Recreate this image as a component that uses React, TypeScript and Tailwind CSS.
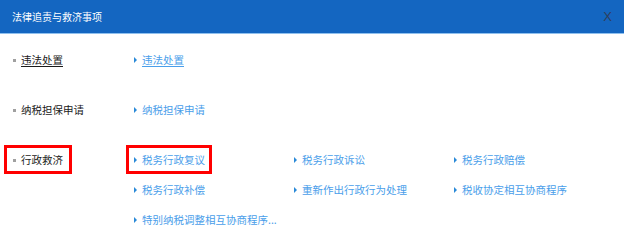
const font = { fontFamily: '"Noto Sans CJK SC", "Noto Sans", sans-serif' };

type Item = { text: string; marked?: boolean; underline?: boolean };
type Group = { label: string; marked?: boolean; underline?: boolean; items: Item[] };

const groups: Group[] = [
  { label: "违法处置", underline: true, items: [{ text: "违法处置", underline: true }] },
  { label: "纳税担保申请", items: [{ text: "纳税担保申请" }] },
  {
    label: "行政救济",
    marked: true,
    items: [
      { text: "税务行政复议", marked: true },
      { text: "税务行政诉讼" },
      { text: "税务行政赔偿" },
      { text: "税务行政补偿" },
      { text: "重新作出行政行为处理" },
      { text: "税收协定相互协商程序" },
      { text: "特别纳税调整相互协商程序..." },
    ],
  },
];

function RedBox({ left, right }: { left: string; right: string }) {
  return <span className={`pointer-events-none absolute top-0 bottom-[1px] ${left} ${right} border-[3px] border-[#ff0000]`} />;
}

function Link({ item }: { item: Item }) {
  return (
    <div className="flex h-[30px] items-start">
      <span className="relative flex h-[30px] items-center">
        <span className="mr-[5px] h-0 w-0 border-y-[3px] border-l-[3px] border-y-transparent border-l-[#2b8ad8]" />
        <span className={`text-[10.5px] text-[#4a9eea] ${item.underline ? "underline underline-offset-2" : ""}`}>{item.text}</span>
        {item.marked && <RedBox left="-left-[8px]" right="-right-[7px]" />}
      </span>
    </div>
  );
}

export default function App() {
  return (
    <div className="h-[244px] w-[624px] overflow-hidden bg-white" style={font}>
      <div className="flex h-[34px] items-center justify-between border-b border-[#8fc0ee] bg-[#1466c1] pl-[12px] pr-[12px]">
        <span className="text-[10px] text-white">法律追责与救济事项</span>
        <span className="text-[13px] leading-none text-[#2f3f5c]" style={{ fontFamily: '"Liberation Sans", sans-serif' }}>X</span>
      </div>
      <div className="flex flex-col gap-5 pt-[11px]">
        {groups.map((g) => (
          <div key={g.label} className="flex">
            <div className="w-[134px] shrink-0">
              <span className="relative ml-[13px] flex h-[30px] w-fit items-center">
                <span className="mr-[5px] h-[3px] w-[3px] bg-[#a0a0a0]" />
                <span className={`text-[10.5px] text-[#1a1a1a] ${g.underline ? "underline underline-offset-2" : ""}`}>{g.label}</span>
                {g.marked && <RedBox left="-left-[9px]" right="-right-[9px]" />}
              </span>
            </div>
            <div className="grid grid-cols-[160px_160px_160px]">
              {g.items.map((it) => (
                <Link key={it.text} item={it} />
              ))}
            </div>
          </div>
        ))}
      </div>
    </div>
  );
}
